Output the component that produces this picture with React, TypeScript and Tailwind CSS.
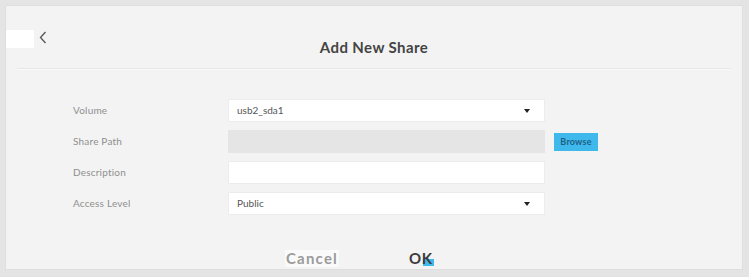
import React from 'react'

const Caret = () => (
  <svg width="6" height="4" viewBox="0 0 6 4" className="absolute right-[14px] top-1/2 -translate-y-1/2">
    <path d="M0 0 L6 0 L3 4 Z" fill="#222" />
  </svg>
)

const Row: React.FC<{ label: string; children: React.ReactNode }> = ({ label, children }) => (
  <div className="flex items-center h-[23px]">
    <span className="w-[155px] text-[10px] text-[#8f8f8f] tracking-[0.2px]">{label}</span>
    {children}
  </div>
)

export default function App() {
  return (
    <div className="w-[749px] h-[277px] bg-[#e4e4e4] pt-[5px] pl-[5px] font-['Lato','Liberation_Sans',sans-serif]">
      <div className="w-[738px] h-[265px] bg-[#f3f3f3] border border-[#dedede] flex flex-col">
        <div className="relative h-[62px] flex items-center justify-center pt-[21px]">
          <div className="absolute left-0 top-[24px] w-[28px] h-[18px] bg-white" />
          <svg width="8" height="13" viewBox="0 0 8 13" className="absolute left-[33px] top-[25px]">
            <path d="M6.5 1 L1.5 6.5 L6.5 12" stroke="#555" strokeWidth="1.3" fill="none" />
          </svg>
          <h1 className="text-[15px] font-bold text-[#444] tracking-[0.4px]">Add New Share</h1>
        </div>
        <div className="mx-[11px] h-[2px] bg-[#e6e6e6] border-b border-[#fafafa]" />
        <div className="flex flex-col gap-[8px] pl-[67px] pt-[29px]">
          <Row label="Volume">
            <div className="relative w-[317px] h-[23px] bg-white border border-[#ececec] flex items-center px-[8px] text-[10px] text-[#555]">
              usb2_sda1
              <Caret />
            </div>
          </Row>
          <Row label="Share Path">
            <div className="w-[317px] h-[23px] bg-[#e5e5e5]" />
            <button className="ml-[9px] w-[44px] h-[18px] bg-[#3fb9ec] text-[9px] font-bold text-[#1e5f86] tracking-[0.2px]">Browse</button>
          </Row>
          <Row label="Description">
            <div className="w-[317px] h-[23px] bg-white border border-[#ececec]" />
          </Row>
          <Row label="Access Level">
            <div className="relative w-[317px] h-[23px] bg-white border border-[#ececec] flex items-center px-[8px] text-[10px] text-[#555]">
              Public
              <Caret />
            </div>
          </Row>
        </div>
        <div className="flex-1 flex items-end pl-[279px] pb-[2px] gap-[70px]">
          <span className="px-[1px] bg-[#fafafa] text-[15px] font-bold text-[#9b9b9b] tracking-[1.2px] leading-[17px]">Cancel</span>
          <span className="relative text-[15px] font-bold text-[#3c3c3c] tracking-[0.5px] leading-[17px]">
            <span className="absolute left-[14px] top-[9px] w-[11px] h-[7px] bg-[#3fb9ec]" />
            <span className="relative">OK</span>
          </span>
        </div>
      </div>
    </div>
  )
}
